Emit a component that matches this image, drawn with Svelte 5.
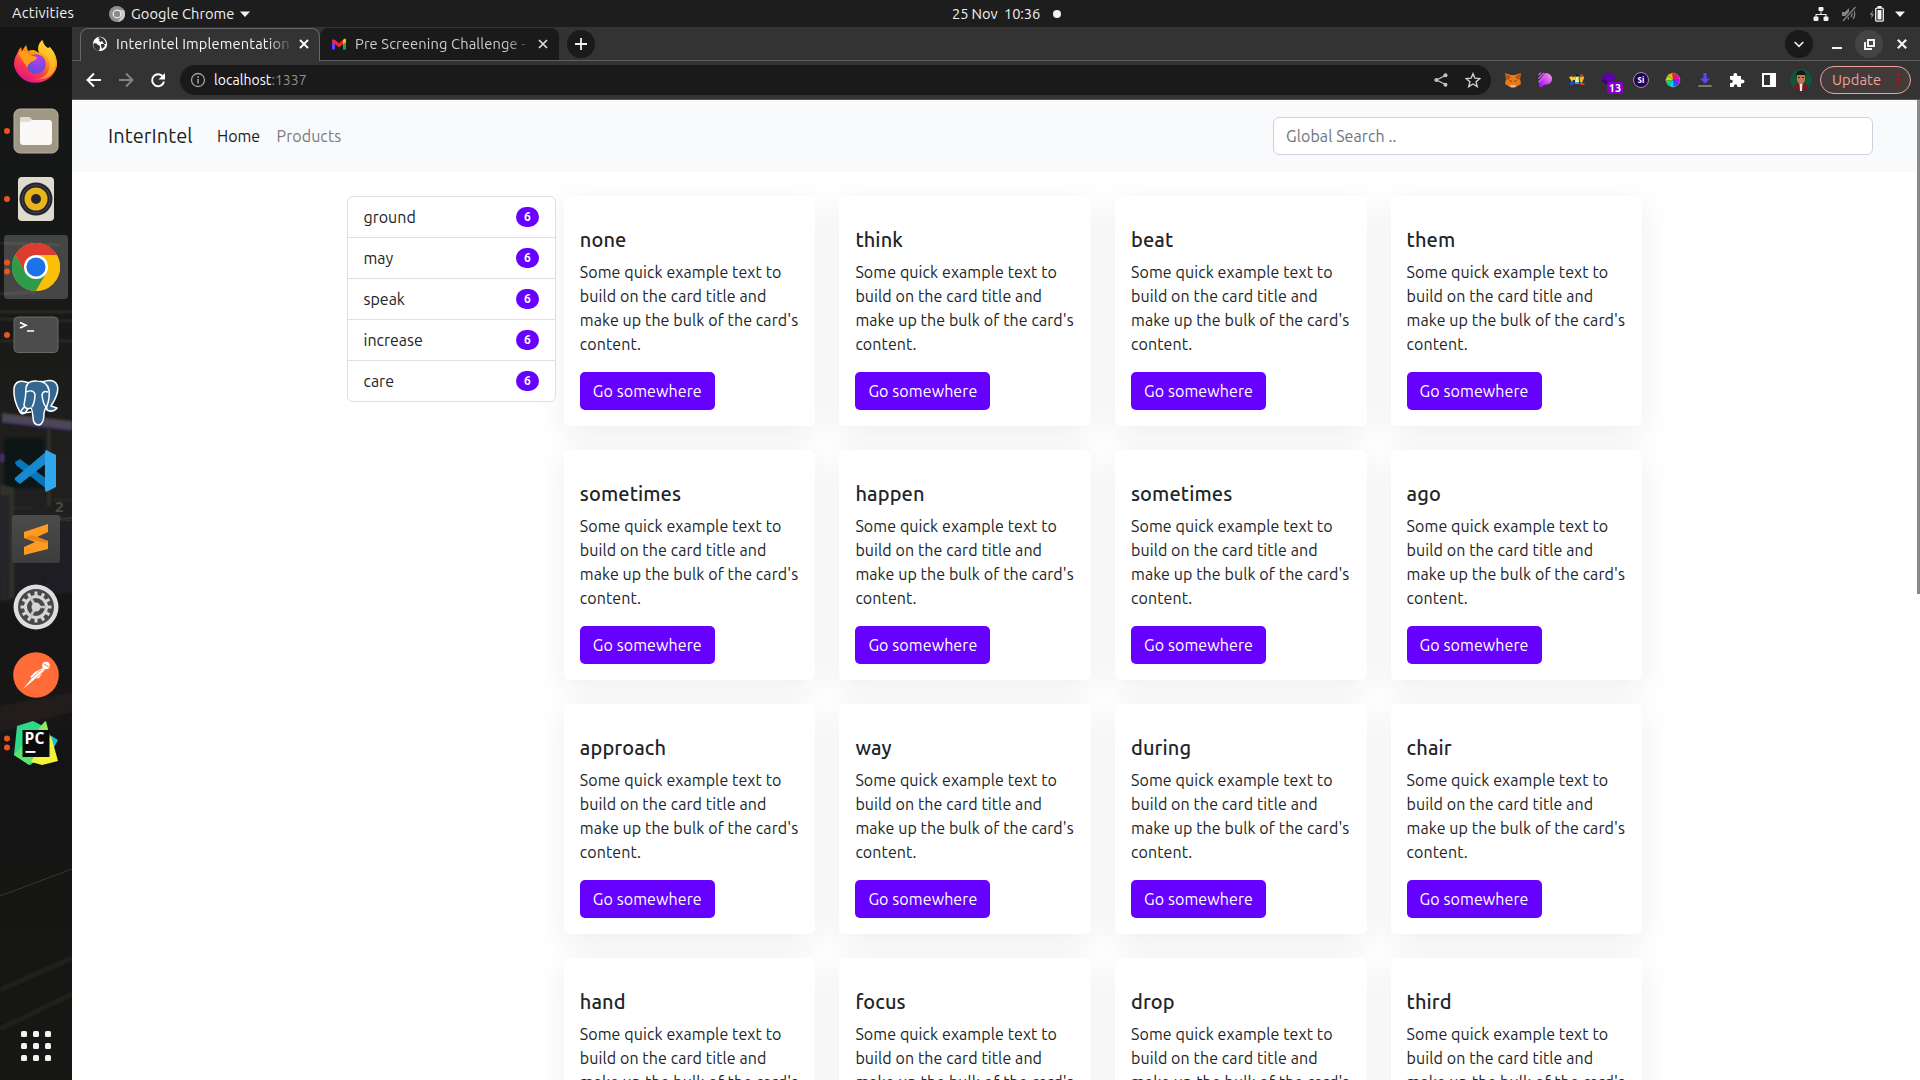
<script>
  const categories = ['ground', 'may', 'speak', 'increase', 'care'];
  const products = [
    'none', 'think', 'beat', 'them',
    'sometimes', 'happen', 'sometimes', 'ago',
    'approach', 'way', 'during', 'chair',
    'hand', 'focus', 'drop', 'third'
  ];
  const gearTeeth = Array.from({ length: 12 }, (_, i) => i * 30);
  const wheel = ['#ff1f1f', '#ff00c8', '#8b1fff', '#1f5bff', '#00d5ff', '#00e676', '#a8f000', '#ffb300'];
  const grid = [0, 1, 2, 3, 4, 5, 6, 7, 8];
</script>

<div class="screen">
  <header class="topbar">
    <span class="activities">Activities</span>
    <div class="app-menu">
      <svg width="16" height="16" viewBox="0 0 16 16">
        <circle cx="8" cy="8" r="8" fill="#8f8f8f" />
        <path d="M8 4h7a8 8 0 0 1-6 12l3-6z" fill="#c9c9c9" />
        <circle cx="8" cy="8" r="4.4" fill="#eee" /><circle cx="8" cy="8" r="3.2" fill="#8a8a8a" />
      </svg>
      <span class="app-name">Google Chrome</span>
      <svg class="caret" width="10" height="6" viewBox="0 0 10 6"><path d="M0 .5h10L5 6z" fill="#f2f2f2" /></svg>
    </div>
    <div class="clock"><span class="date">25 Nov&nbsp; 10:36</span><i class="notify"></i></div>
    <div class="status">
      <svg width="16" height="16" viewBox="0 0 16 16" fill="#f2f2f2">
        <rect x="5.5" y="1" width="5" height="4" rx="1" /><path d="M7.5 4h1v4h5v3h-1V9h-9v2h-1V8h5z" />
        <rect x=".5" y="10.500" width="5" height="4.500" rx="1.200" /><rect x="10.500" y="10.500" width="5" height="4.500" rx="1.200" />
      </svg>
      <svg width="16" height="16" viewBox="0 0 16 16" fill="none" stroke="#858585">
        <path d="M1 6h3l4-4v12l-4-4H1z" fill="#858585" stroke="none" /><path d="M10 5q2 3 0 6M12 3q3.500 5 0 10" stroke-width="1.300" />
        <path d="M2 15L14.500 1" stroke="#1d1d1d" stroke-width="3" /><path d="M2 15L14.500 1" stroke-width="1.200" />
      </svg>
      <svg width="16" height="16" viewBox="0 0 16 16">
        <path d="M4 4L.8 9h2L2 13l3-5H3.300z" fill="#8a8a8a" />
        <rect x="6.700" y="2.200" width="7.600" height="13" rx="1.200" fill="none" stroke="#f2f2f2" stroke-width="1.300" />
        <path d="M8.500 0h4v2h-4zM8.500 4h4v9.500h-4z" fill="#f2f2f2" />
      </svg>
      <svg class="system-caret" width="10" height="6" viewBox="0 0 10 6"><path d="M0 .5h10L5 6z" fill="#f2f2f2" /></svg>
    </div>
  </header>

  <div class="desktop">
    <nav class="dock">
      <svg class="wallpaper" width="72" height="1053" viewBox="0 27 72 1053" preserveAspectRatio="none">
        <defs>
          <linearGradient id="wall" x1="0" y1="0" x2="0" y2="1">
            <stop offset="0" stop-color="#151515" /><stop offset=".2" stop-color="#161717" />
            <stop offset=".3" stop-color="#191918" /><stop offset=".42" stop-color="#20201f" />
            <stop offset=".52" stop-color="#1d1e21" /><stop offset=".62" stop-color="#191817" />
            <stop offset=".7" stop-color="#141414" /><stop offset="1" stop-color="#171714" />
          </linearGradient>
          <filter id="haze"><feGaussianBlur stdDeviation="1" /></filter>
        </defs>
        <rect y="27" width="72" height="1053" fill="url(#wall)" />
        <g filter="url(#haze)">
          <path d="M0 243l60 2M0 294l36-2M0 312h72M0 341h72M0 319l72 2" stroke="#38352c" stroke-width="1.500" />
          <path d="M2 413l70 8v9l-70-8z" fill="#4b4653" />
          <path d="M2 422l70 8" stroke="#46307a" stroke-width="1.500" />
          <path d="M0 454h4v8H0z" fill="#49316c" />
          <path d="M4 438h40v50H4z" fill="#111214" />
          <path d="M49 426v80M49 380v28" stroke="#37322d" stroke-width="3" />
          <path d="M0 484l14 4v110H0z" fill="#33302a" />
          <path d="M0 495h10v105H0z" fill="#25282a" />
          <path d="M14 508h18M54 500h18M54 520h18" stroke="#3c3934" />
          <path d="M52 515h20v85H44z" fill="#1b1e26" opacity=".6" />
          <path d="M0 602l72-10v90L0 706z" fill="#171716" />
          <path d="M0 706l72-14v20L0 732z" fill="#211e1a" />
          <path d="M0 990l72-32M0 1029l72-35" stroke="#24241e" stroke-width="5" />
        </g>
        <path d="M0 896l72-27" stroke="#373733" />
        <text class="wall-number" x="55" y="512">2</text>
        <text class="wall-word" x="58" y="521">Aven</text>
      </svg>

      <div class="slots">
        <div class="slot">
          <svg width="46" height="46" viewBox="0 0 46 46">
            <defs>
              <linearGradient id="fox" x1=".85" y1=".05" x2=".3" y2="1"><stop offset="0" stop-color="#fff44f" /><stop offset=".38" stop-color="#ff980e" /><stop offset=".68" stop-color="#ff3b4a" /><stop offset="1" stop-color="#e0118a" /></linearGradient>
              <radialGradient id="orb" cx=".6" cy=".25" r=".9"><stop offset="0" stop-color="#b83bf5" /><stop offset="1" stop-color="#4a54d6" /></radialGradient>
            </defs>
            <path d="M4 14q1-4 4-7l1 4 4-6 2 6q5-2 8 0l3 2q-3-7 3-13 2 6 6 8l2-1q8 9 7 19A22 22 0 0 1 1 25Q1 18 4 14z" fill="url(#fox)" />
            <path d="M26 10q2 4 7 6 6 8 2 16-5 8-14 7 14 2 20-8 4-10-3-20-8-5-8-11-6 5-4 10z" fill="#ffc72e" opacity=".65" />
            <circle cx="23" cy="24" r="9.800" fill="url(#orb)" />
            <path d="M5 13l4-2q5 0 7 4l8 2q0 3-6 5-3 2-4 6-1-4-3-5z" fill="#ff9d18" />
          </svg>
        </div>
        <div class="slot">
          <i class="dot"></i>
          <svg width="46" height="46" viewBox="0 0 46 46">
            <rect x="1" y="1" width="44" height="44" rx="6" fill="#a09884" stroke="#b8b09e" />
            <path d="M7 11q0-2 2-2h7l4 4h14v8H7z" fill="#ddd8cc" /><rect x="7" y="12" width="32" height="25" rx="3" fill="#faf9f8" />
            <path d="M7 11q0-2 2-2h7q1 0 2 1.500l1 1.500q-2 2-4 2H7z" fill="#e1dcd0" />
          </svg>
        </div>
        <div class="slot">
          <i class="dot"></i>
          <svg width="38" height="46" viewBox="0 0 38 46">
            <rect x="1" y="1" width="36" height="44" rx="4" fill="#dfdbcf" />
            <circle cx="19" cy="23" r="16.500" fill="#23242e" /><circle cx="19" cy="23" r="14" fill="none" stroke="#454754" />
            <circle cx="19" cy="23" r="11.500" fill="#eab51b" /><circle cx="19" cy="23" r="5" fill="#27272b" />
          </svg>
        </div>
        <div class="slot active">
          <i class="dot upper"></i><i class="dot lower"></i>
          <svg width="48" height="48" viewBox="0 0 48 48">
            <circle cx="24" cy="24" r="24" fill="#fbbc04" />
            <path d="M3.200 12A24 24 0 0 1 44.800 12H24L13.600 30z" fill="#dc3b2f" />
            <path d="M3.200 12L13.600 30 24 36 34.400 30 24 48A24 24 0 0 1 3.200 12z" fill="#2d9c4b" />
            <path d="M24 12h20.800A24 24 0 0 1 24 48l10.400-18z" fill="#fcbf08" />
            <circle cx="24" cy="24" r="12" fill="#fff" /><circle cx="24" cy="24" r="9.600" fill="#1a73e8" />
          </svg>
        </div>
        <div class="slot">
          <i class="dot"></i>
          <svg width="46" height="38" viewBox="0 0 46 38">
            <rect x="1" y="1" width="44" height="35.500" rx="4" fill="#4c4c4c" stroke="#686868" />
            <path d="M7 6.500l6 2.800-6 2.800M14 15h7" fill="none" stroke="#fff" stroke-width="1.700" />
          </svg>
        </div>
        <div class="slot">
          <svg width="48" height="50" viewBox="0 0 48 50" fill="#336791" stroke="#fff" stroke-width="1.500" stroke-linejoin="round">
            <path d="M14 4Q4 1 2 10q-1 12 6 24 2 3 5 1l5-7 12-20z" />
            <path d="M30 4Q42 0 45 7q3 7-6 21l6 2q-4 5-10 2z" />
            <path d="M14 10q1-8 11-7 10 0 12 9 1 8-2 16-3 4-3 7 0 11-5 12-6 0-6-8-1-8-2-9-6 2-7-3 2-9 2-17z" />
            <path d="M14 14q7-3 9 2 0 8-3 13M36 14q-5-2-6 3 1 9 4 12M12 29l-3 4q-1 3 10 1" fill="none" />
          </svg>
        </div>
        <div class="slot">
          <svg width="44" height="44" viewBox="0 0 44 44">
            <path d="M1 13l5-3 28 21v10L2 16q-1-2-1-3z" fill="#0877b9" />
            <path d="M1 31l5 4 28-22V1L2 28q-2 1-1 3z" fill="#1689d0" />
            <path d="M32 1l10 5v32l-10 5q-1-1-1-3V4q0-2 1-3z" fill="#31a8ee" />
          </svg>
        </div>
        <div class="slot">
          <div class="tile">
            <svg width="26" height="32" viewBox="0 0 26 32"><path d="M1 9L25 1v8l-11 5 11 4v8L1 32v-8l11-5-11-4z" fill="#ff9b20" /><path d="M1 15l8-3 16 6-1 2-10-2z" fill="#e8851a" /></svg>
          </div>
        </div>
        <div class="slot">
          <svg width="46" height="46" viewBox="0 0 46 46">
            <circle cx="23" cy="23" r="22.500" fill="#dedede" /><circle cx="23" cy="23" r="18" fill="#484848" />
            {#each gearTeeth as a}<rect x="21.500" y="7.500" width="3" height="5" fill="#d6d6d6" transform="rotate({a} 23 23)" />{/each}
            <circle cx="23" cy="23" r="10.500" fill="none" stroke="#d6d6d6" stroke-width="3" />
            <path d="M23 23h11M23 23l-6 10M23 23l-6-10" stroke="#c5c5c5" stroke-width="2.500" /><circle cx="23" cy="23" r="4.500" fill="#d6d6d6" />
          </svg>
        </div>
        <div class="slot">
          <svg width="46" height="46" viewBox="0 0 46 46">
            <circle cx="23" cy="23" r="22.800" fill="#ff6c37" />
            <circle cx="33" cy="13.500" r="3.800" fill="#fff" /><path d="M31 12l5 3" stroke="#ff6c37" />
            <path d="M30 16l-8 4-5 5 2 1-9 11 12-10 4-1 6-9z" fill="#fff" /><path d="M28 18l-9 8M30 20l-9 8" stroke="#ff6c37" stroke-width=".8" />
          </svg>
        </div>
        <div class="slot">
          <i class="dot upper"></i><i class="dot lower"></i>
          <svg width="46" height="46" viewBox="0 0 46 46">
            <path d="M4 6l16-5 12 6 2 27-17 11L1 35z" fill="#2ed98a" /><path d="M25 9l7-8 5 14 8 5-10 18z" fill="#15bfe2" />
            <path d="M25 9l8-8 4 17z" fill="#9be84e" /><path d="M38 16l7 25-16 4-14-4 2-8z" fill="#f4f33a" /><path d="M1 35l12-14 8 16-5 8z" fill="#5ce56a" />
            <rect x="9.500" y="10" width="27" height="27" fill="#0b0b0d" /><rect x="12.500" y="31" width="10" height="1.900" fill="#fff" />
            <text class="pc" x="11.500" y="23.500">PC</text>
          </svg>
        </div>
      </div>

      <div class="launcher">{#each grid as cell (cell)}<i></i>{/each}</div>
    </nav>

    <main class="window">
      <div class="tabs">
        <div class="tab current">
          <svg width="16" height="16" viewBox="0 0 16 16">
            <circle cx="8" cy="8" r="7.200" fill="#fff" />
            <path d="M2 7q3 0 4 2 2 0 2 2 0 2-1 4-5-1-5.800-6zM6 2l2 2H7l1 2 2-1 2 3h2q-1-6-6-7zM9 8h3l1 2-3 3q-1-2-1-5z" fill="#333" />
          </svg>
          <span class="label">InterIntel Implementation</span>
          <svg class="x" width="10" height="10" viewBox="0 0 10 10"><path d="M1 1l8 8M9 1L1 9" stroke="#fff" stroke-width="1.800" /></svg>
        </div>
        <div class="tab idle">
          <svg width="16" height="16" viewBox="0 0 16 16">
            <path d="M1 3.500v10h3V6z" fill="#6a3cff" /><path d="M12 6v7.500h3v-10z" fill="#19a94b" />
            <path d="M1 3.500l3 .3 4 3.500 4-3.500v4.500L8 11.500 4 8.300 1 6z" fill="#f0232f" /><path d="M12 3.800l2-1.300q1 .3 1 1.800V6l-3 2.300z" fill="#ffc400" />
          </svg>
          <span class="label">Pre Screening Challenge -</span>
          <svg class="x" width="10" height="10" viewBox="0 0 10 10"><path d="M1 1l8 8M9 1L1 9" stroke="#ddd" stroke-width="1.700" /></svg>
        </div>
        <div class="round add"><svg width="12" height="12" viewBox="0 0 12 12"><path d="M6 0v12M0 6h12" stroke="#f2f2f2" stroke-width="1.800" /></svg></div>
        <div class="controls">
          <div class="round dark"><svg width="10" height="7" viewBox="0 0 10 7"><path d="M.7 1L5 5.300 9.300 1" fill="none" stroke="#eee" stroke-width="1.700" /></svg></div>
          <svg class="minimize" width="10" height="10" viewBox="0 0 10 10"><path d="M0 9h10" stroke="#f2f2f2" stroke-width="2" /></svg>
          <div class="round light"><svg width="11" height="11" viewBox="0 0 11 11" fill="none" stroke="#f2f2f2" stroke-width="2"><path d="M4 1h6v6H4z" /><path d="M1 3v7h7" /></svg></div>
          <svg class="close" width="10" height="10" viewBox="0 0 10 10"><path d="M.8.8l8.400 8.400M9.200.8L.8 9.200" stroke="#f2f2f2" stroke-width="2.200" /></svg>
        </div>
      </div>

      <div class="toolbar">
        <div class="navigate">
          <svg width="16" height="16" viewBox="0 0 16 16" fill="none" stroke="#fff" stroke-width="1.900"><path d="M15 8H2M8 1.500L1.500 8 8 14.500" /></svg>
          <svg width="16" height="16" viewBox="0 0 16 16" fill="none" stroke="#858585" stroke-width="1.900"><path d="M1 8h13M8 1.500L14.500 8 8 14.500" /></svg>
          <svg width="16" height="16" viewBox="0 0 16 16"><path d="M13.200 5A6 6 0 1 0 14 9.500" fill="none" stroke="#fff" stroke-width="1.900" /><path d="M15 1v6.500H8.500z" fill="#fff" /></svg>
        </div>
        <div class="omnibox">
          <svg width="16" height="16" viewBox="0 0 16 16"><circle cx="8" cy="8" r="6.500" fill="none" stroke="#9aa0a6" stroke-width="1.300" /><path d="M7.200 7h1.600v4.500H7.200zM7.200 4.300h1.600v1.600H7.200z" fill="#9aa0a6" /></svg>
          <span class="url">localhost<em>:1337</em></span>
          <div class="page-actions">
            <svg width="16" height="16" viewBox="0 0 16 16" fill="#c4c4c4"><path d="M12.500 3.500L3.500 8l9 4.500" fill="none" stroke="#c4c4c4" stroke-width="1.300" /><circle cx="12.500" cy="3.300" r="2" /><circle cx="3.300" cy="8" r="2" /><circle cx="12.500" cy="12.700" r="2" /></svg>
            <svg width="16" height="16" viewBox="0 0 16 16"><path d="M8 1.700l1.900 4.500 4.900.4-3.700 3.200 1.100 4.800L8 12l-4.200 2.600 1.100-4.800-3.700-3.200 4.900-.4z" fill="none" stroke="#d0d0d0" stroke-width="1.400" /></svg>
          </div>
        </div>
        <div class="extensions">
          <svg width="16" height="16" viewBox="0 0 16 16">
            <path d="M0 1l6 2h4l6-2-1 6 1 5-5 3H5l-5-3 1-5z" fill="#e87a17" /><path d="M0 1l6 4-3 3-2-1zM16 1l-6 4 3 3 2-1z" fill="#b75512" />
            <path d="M4 8l3 1-1 1zM12 8L9 9l1 1z" fill="#553018" /><path d="M5 13h6l-1 2.500H6z" fill="#d4bfae" />
          </svg>
          <svg width="16" height="16" viewBox="0 0 16 16">
            <defs><linearGradient id="pink" x1="1" y1="0" x2="0" y2="1"><stop offset="0" stop-color="#ffa0dd" /><stop offset="1" stop-color="#9d00ff" /></linearGradient></defs>
            <path d="M2 15V9l6-8q7 0 7 6.500-1 5-6 5-3 0-4 2.500z" fill="url(#pink)" /><path d="M1.500 3L4 .7M1.500 6.500L7 1M1.500 10L9 2.500" stroke="#d45cff" stroke-width="1.300" />
          </svg>
          <svg width="16" height="16" viewBox="0 0 16 16">
            <path d="M0 5l4-1 2 1v3H4l-1 2z" fill="#f5cf31" /><path d="M6.500 4h3l.5 6H6z" fill="#f4ec9b" /><path d="M10.500 5l4-1 .5 2-2 5-2-1z" fill="#f2b82c" />
            <path d="M1 10h4l-1 3H1z" fill="#244cd8" /><path d="M6 10h4v2H6z" fill="#24a3e8" /><path d="M11 11h5l-1 2h-4z" fill="#d9372b" /><circle cx="4" cy="4" r="1.300" fill="#754719" /><circle cx="8" cy="3.500" r="1.300" fill="#1d1714" /><circle cx="12.500" cy="3.500" r="1.500" fill="#a75022" />
          </svg>
          <div class="badged">
            <svg width="16" height="16" viewBox="0 0 16 16"><path d="M8 0l8 5.500L8 11 0 5.500z" fill="#5e00ad" /><path d="M0 9l3-2 6 4v4z" fill="#42007b" /></svg>
            <b>13</b>
          </div>
          <svg width="16" height="16" viewBox="0 0 16 16"><circle cx="8" cy="8" r="7.500" fill="#270052" stroke="#a99abb" stroke-width=".9" /><text class="si" x="8" y="11" text-anchor="middle">Si</text></svg>
          <svg width="16" height="16" viewBox="0 0 16 16">
            <circle cx="8" cy="8" r="6.800" fill="none" stroke="#aaa" stroke-width=".8" />
            {#each wheel as colour, i}<path d="M8 8L7.500.5 12 3z" fill={colour} transform="rotate({i * 45} 8 8)" />{/each}
          </svg>
          <svg width="16" height="16" viewBox="0 0 16 16"><path d="M6.500 1h3v5.500H13L8 11.500 3 6.500h3.500z" fill="#5548ff" /><rect x="1" y="13" width="14" height="2" rx="1" fill="#777" /></svg>
          <svg width="16" height="16" viewBox="0 0 16 16"><path d="M1 4h3.500q-.5-3 1.800-3t1.900 3H12v3.500q3.500-.5 3.500 1.800T12 11.500V15H8.500q0-2.700-1.900-2.700T4.700 15H1v-3.800q2.800 0 2.800-1.900T1 7.400z" fill="#fff" /></svg>
          <svg width="16" height="16" viewBox="0 0 16 16"><path d="M1 1h14v14H1zM3 3v10h6V3z" fill="#fff" fill-rule="evenodd" /></svg>
        </div>
        <svg class="avatar" width="22" height="22" viewBox="0 0 22 22">
          <circle cx="11" cy="11" r="11" fill="#14523d" /><path d="M4 19.500q0-4.500 4-5.500h6q4 1 4 5.500-7 5-14 0z" fill="#7d1220" /><path d="M9.500 14h3l-.5 8h-2z" fill="#eee" />
          <path d="M7 5q4-3 8 0v6q-1 4-4 4t-4-4z" fill="#b97a4c" /><path d="M6 8q0-7 5-6.500Q16 1 16 8l-1-2H7z" fill="#191613" /><path d="M8 8.500h2M12 8.500h2" stroke="#332016" />
        </svg>
        <div class="update"><span>Update</span><i class="menu-dots"></i></div>
      </div>

      <div class="page">
        <div class="navbar">
          <span class="brand">InterIntel</span>
          <a class="home" href="#home">Home</a>
          <a class="products" href="#products">Products</a>
          <div class="search">Global Search ..</div>
        </div>
        <div class="content">
          <ul class="categories">
            {#each categories as name}
              <li><span>{name}</span><b>6</b></li>
            {/each}
          </ul>
          <div class="cards">
            {#each products as title}
              <article>
                <h5>{title}</h5>
                <p>Some quick example text to<br />build on the card title and<br />make up the bulk of the card's<br />content.</p>
                <button>Go somewhere</button>
              </article>
            {/each}
          </div>
        </div>
        <div class="scrollbar"></div>
      </div>
    </main>
  </div>
</div>

<style>
  :global(body) { margin: 0; overflow: hidden; background: #1d1d1d; }
  .screen, .screen * { box-sizing: border-box; }
  .screen { width: 1920px; height: 1080px; overflow: hidden; display: flex; flex-direction: column; font-family: Ubuntu, "Noto Sans", sans-serif; color: #212529; }
  svg { display: block; flex: none; }

  .topbar { height: 27px; flex: none; background: #1d1d1d; color: #f0f0f0; font-size: 14.670px; line-height: 26px; display: grid; grid-template-columns: 97px 843px 1fr auto; padding: 0 15px 0 12px; white-space: nowrap; }
  .activities { letter-spacing: .2px; }
  .app-menu { display: flex; align-items: center; gap: 6px; }
  .app-name { width: 104px; letter-spacing: .05px; }
  .caret { margin-left: -1px; }
  .clock { display: flex; align-items: center; }
  .date { width: 101px; letter-spacing: -.1px; }
  .notify { width: 8px; height: 8px; border-radius: 50%; background: #f2f2f2; }
  .status { display: flex; align-items: center; gap: 12px; }
  .system-caret { margin-left: -2px; }

  .desktop { flex: 1; min-height: 0; display: flex; }
  .dock { width: 72px; flex: none; position: relative; overflow: hidden; background: #151515; display: flex; flex-direction: column; justify-content: space-between; }
  .wallpaper { position: absolute; inset: 0; }
  .wall-number { font: bold 15px "Noto Sans"; fill: #4b4944; }
  .wall-word { font: 6.500px "Noto Sans"; fill: #45433e; }
  .slots { position: relative; padding-top: 2px; }
  .slot { height: 68px; display: flex; align-items: center; justify-content: center; position: relative; }
  .slot.active::before { content: ""; position: absolute; z-index: 0; width: 64px; height: 64px; border-radius: 4px; background: rgba(255, 255, 255, .2); }
  .slot svg { position: relative; }
  .dot { position: absolute; z-index: 1; left: 4px; width: 6px; height: 6px; border-radius: 50%; background: #e95420; }
  .upper { transform: translateY(-4.500px); }
  .lower { transform: translateY(4.500px); }
  .tile { width: 48px; height: 48px; border-radius: 3px; background: linear-gradient(#4b4b4b, #3d3d3d); display: grid; place-items: center; }
  .pc { font: bold 15.500px "Open Sans", "Noto Sans"; fill: #fff; letter-spacing: .3px; }
  .launcher { position: relative; display: grid; grid-template-columns: repeat(3, 6px); gap: 6px; margin: 0 auto 19px; }
  .launcher i { width: 6px; height: 6px; border-radius: 1.500px; background: #f2f2f2; }

  .window { flex: 1; min-width: 0; display: flex; flex-direction: column; background: #333; }
  .tabs { height: 34px; flex: none; display: flex; border-bottom: 1px solid #5e5e5e; padding: 1px 13px 0 8px; }
  .tab { height: 33px; display: flex; align-items: center; font-size: 14.670px; line-height: 22px; color: #f5f5f5; padding: 0 10px 2px 11px; white-space: nowrap; }
  .tab .label { width: 177px; margin-left: 8px; overflow: hidden; letter-spacing: .14px; -webkit-mask-image: linear-gradient(90deg, #000 150px, transparent 178px); mask-image: linear-gradient(90deg, #000 150px, transparent 178px); }
  .tab .x { margin-left: 6px; }
  .current { width: 240px; background: #333; border: 1px solid #666; border-bottom: 0; border-radius: 8px 8px 0 0; }
  .idle { width: 239px; height: 32px; background: #1a1a1a; border-radius: 8px 8px 0 0; color: #ccc; padding-bottom: 0; }
  .round { width: 28px; height: 28px; border-radius: 50%; display: grid; place-items: center; background: #1a1a1a; }
  .add { margin: 2px 0 0 8px; }
  .controls { display: flex; align-items: center; height: 32px; margin-left: auto; }
  .minimize { margin: 0 13px 0 19px; }
  .light { background: #444; }
  .close { margin-left: 14px; }

  .toolbar { height: 39px; flex: none; display: flex; align-items: center; border-bottom: 1px solid #5a5757; padding: 0 9px 0 14px; }
  .navigate { display: flex; gap: 16px; margin-right: 14px; }
  .omnibox { width: 1311px; height: 30px; background: #1a1a1a; border-radius: 15px; display: flex; align-items: center; padding: 0 10px; font-size: 14px; color: #fff; }
  .url { margin-left: 8px; letter-spacing: .05px; }
  .url em { font-style: normal; color: #8e8e8e; }
  .page-actions { display: flex; gap: 16px; margin-left: auto; }
  .extensions { display: flex; gap: 16px; margin-left: 14px; }
  .badged { position: relative; width: 16px; height: 16px; }
  .badged b { position: absolute; left: 6px; top: 10px; width: 16px; height: 12px; border-radius: 2px; background: #8500c7; color: #fff; font-size: 11px; line-height: 12px; text-align: center; }
  .si { font: bold 8px "Noto Sans"; fill: #fff; }
  .avatar { margin: 0 8px 0 13px; }
  .update { width: 91px; height: 28px; flex: none; border: 1px solid #f0a29b; border-radius: 14px; background: #433b3a; color: #f1a19a; display: flex; align-items: center; justify-content: space-between; padding: 0 10px 1px 11px; font-size: 14.670px; letter-spacing: .1px; }
  .menu-dots { width: 3px; height: 3px; border-radius: 50%; background: #e00000; box-shadow: 0 -5px #e00000, 0 5px #e00000; }

  .page { flex: 1; min-height: 0; background: #fff; position: relative; overflow: hidden; }
  .navbar { height: 72px; background: #f8fafc; display: flex; align-items: center; padding: 0 47px 0 36px; font-size: 16px; white-space: nowrap; }
  .navbar a { text-decoration: none; }
  .brand { width: 109px; font-size: 20px; letter-spacing: .1px; padding-bottom: 1px; color: #191c1f; }
  .home { width: 59.500px; color: #191c1f; }
  .products { color: #7b7c7e; letter-spacing: .08px; }
  .search { width: 600px; height: 38px; margin-left: auto; background: #fff; border: 1px solid #ced1de; border-radius: 6px; color: #6c757d; padding: 0 12px; line-height: 36px; letter-spacing: .08px; }
  .content { display: flex; align-items: flex-start; padding: 24px 0 0 275px; gap: 7.800px; }
  .categories { position: relative; width: 209px; flex: none; margin: 0; padding: 0; list-style: none; background: #fff; border: 1px solid #dfdfdf; border-radius: 6px; font-size: 16px; }
  .categories li { height: 41px; padding: 0 16px 0 15.500px; display: flex; align-items: center; justify-content: space-between; border-bottom: 1px solid #dfdfdf; }
  .categories li:last-child { border: 0; height: 40px; }
  .categories b { width: 23px; height: 20px; border-radius: 10px; background: #60f; color: #fff; font-size: 12px; line-height: 20px; text-align: center; }
  .cards { display: grid; grid-template-columns: repeat(4, 251.600px); gap: 24px; }
  article { height: 230px; padding: 32px 16px 16px; background: #fff; border-radius: 6px; box-shadow: 0 8px 32px rgba(33, 37, 41, .08); }
  h5 { margin: 0 0 8px; font-size: 20px; line-height: 24px; font-weight: 500; letter-spacing: .12px; }
  p { margin: 0 0 16px; font-size: 16px; line-height: 24px; white-space: nowrap; letter-spacing: .09px; }
  button { display: block; width: 135px; height: 38px; border: 0; border-radius: 5px; background: #60f; color: #fff; font: 16px/24px Ubuntu, "Noto Sans", sans-serif; letter-spacing: .09px; padding: 7px 0; white-space: nowrap; }
  .scrollbar { position: absolute; top: 0; right: 0; width: 3px; height: 494px; background: #888; }
</style>
